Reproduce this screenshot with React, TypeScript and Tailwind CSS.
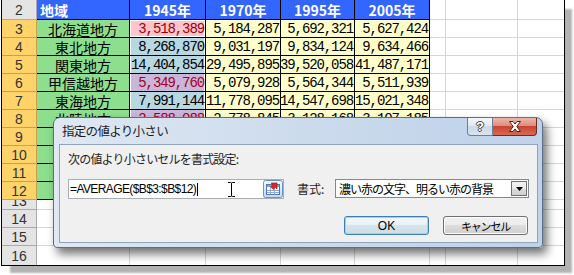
import React from "react";

const JP = "font-['Noto_Sans_CJK_JP',sans-serif]";
const NUM = "font-['Liberation_Mono',monospace] text-[14px] tracking-[-1.1px]";
const GRID =
  "grid grid-cols-[35px_93px_76px_75px_74px_75px_16px_72px_46px] grid-rows-[20px_repeat(10,18px)_10px_18px_18px_19px] leading-[16px]";

interface IRow {
  n: number;
  name: string;
  b: string;
  kind: "hot" | "low" | "sel";
  c: string;
  d: string;
  e: string;
}

// rows 9-12 sit fully under the dialog, so their values are left blank
const rows: IRow[] = [
  { n: 3, name: "北海道地方", b: "3,518,389", kind: "hot", c: "5,184,287", d: "5,692,321", e: "5,627,424" },
  { n: 4, name: "東北地方", b: "8,268,870", kind: "sel", c: "9,031,197", d: "9,834,124", e: "9,634,466" },
  { n: 5, name: "関東地方", b: "14,404,854", kind: "sel", c: "29,495,895", d: "39,520,058", e: "41,487,171" },
  { n: 6, name: "甲信越地方", b: "5,349,760", kind: "low", c: "5,079,928", d: "5,564,344", e: "5,511,939" },
  { n: 7, name: "東海地方", b: "7,991,144", kind: "sel", c: "11,778,095", d: "14,547,698", e: "15,021,348" },
  { n: 8, name: "北陸地方", b: "2,588,088", kind: "low", c: "2,778,845", d: "3,128,168", e: "3,107,185" },
  { n: 9, name: "", b: "", kind: "sel", c: "", d: "", e: "" },
  { n: 10, name: "", b: "", kind: "sel", c: "", d: "", e: "" },
  { n: 11, name: "", b: "", kind: "sel", c: "", d: "", e: "" },
  { n: 12, name: "", b: "", kind: "sel", c: "", d: "", e: "" },
];

const bCell = {
  hot: "bg-[#ffc4cc] text-[#9c0006] shadow-[inset_0_0_0_1px_#ffffff]",
  low: "bg-[#c9b6da] text-[#a3001e] shadow-[inset_1px_0_0_#ffffff,inset_-1px_0_0_#ffffff]",
  sel: "bg-[#b7d8e0] text-black shadow-[inset_1px_0_0_#ffffff,inset_-1px_0_0_#ffffff]",
};

const Empty = ({ last, edge }: { last?: boolean; edge?: boolean }) => (
  <div
    className={`border-[#d6d6d6] bg-white ${edge ? "" : "border-r"} ${last ? "" : "border-b"}`}
  />
);

const RowHead = ({ label, hl, last }: { label: string; hl?: boolean; last?: boolean }) => (
  <div
    className={`flex items-center justify-center overflow-hidden border-r font-['Liberation_Sans',sans-serif] text-[14px] text-[#333] ${
      last ? "" : "border-b"
    } ${hl ? "bg-[#fdd36a] border-[#c9a14c]" : "bg-[#e4e4e4] border-[#a7abb0]"}`}
  >
    {label}
  </div>
);

const NumCell = ({ v, cls }: { v: string; cls: string }) => (
  <div
    className={`flex items-center justify-end overflow-hidden whitespace-nowrap border-r border-b border-black pr-[1px] ${NUM} ${cls}`}
  >
    {v}
  </div>
);

const Sheet = () => (
  <div className={GRID}>
    {/* header row */}
    <RowHead label="2" />
    <div className={`flex items-center border-r border-b border-black bg-[#3366ff] pl-[3px] text-[14px] font-bold text-white ${JP}`}>
      地域
    </div>
    {["1945年", "1970年", "1995年", "2005年"].map((y) => (
      <div
        key={y}
        className={`flex items-center justify-center border-r border-b border-black bg-[#3366ff] text-[14px] font-bold text-white ${JP}`}
      >
        {y}
      </div>
    ))}
    <Empty />
    <Empty />
    <Empty edge />

    {rows.map((r) => (
      <React.Fragment key={r.n}>
        <RowHead label={String(r.n)} hl />
        <div className={`flex items-center justify-center overflow-hidden whitespace-nowrap border-r border-b border-black bg-[#8ddf8d] text-[14px] text-black ${JP}`}>
          {r.name}
        </div>
        <NumCell v={r.b} cls={bCell[r.kind]} />
        <NumCell v={r.c} cls="bg-[#ffffcc] text-black" />
        <NumCell v={r.d} cls="bg-[#ffffcc] text-black" />
        <NumCell v={r.e} cls="bg-[#ffffcc] text-black" />
        <Empty />
        <Empty />
        <Empty edge />
      </React.Fragment>
    ))}

    {/* row 13 is squashed under the selection */}
    <div className="overflow-hidden border-r border-b border-[#a7abb0] bg-[#e4e4e4]">
      <div className="-mt-[8px] flex h-[18px] items-center justify-center font-['Liberation_Sans',sans-serif] text-[14px] text-[#333]">
        13
      </div>
    </div>
    {[1, 2, 3, 4, 5, 6, 7].map((i) => (
      <Empty key={i} />
    ))}
    <Empty edge />

    {[14, 15, 16].map((n) => (
      <React.Fragment key={n}>
        <RowHead label={String(n)} last={n === 16} />
        {[1, 2, 3, 4, 5, 6, 7].map((i) => (
          <Empty key={i} last={n === 16} />
        ))}
        <Empty edge last={n === 16} />
      </React.Fragment>
    ))}
  </div>
);

const RefButton = () => (
  <svg width="20" height="18" viewBox="0 0 20 18">
    <defs>
      <linearGradient id="rb" x1="0" y1="0" x2="0" y2="1">
        <stop offset="0" stopColor="#f4f8fd" />
        <stop offset="0.5" stopColor="#dce8f6" />
        <stop offset="1" stopColor="#c4d8ef" />
      </linearGradient>
    </defs>
    <rect x="0.5" y="0.5" width="19" height="17" rx="2" fill="url(#rb)" stroke="#6a93c4" />
    <rect x="3.5" y="4.5" width="13" height="10" fill="#ffffff" stroke="#4a78b8" />
    <rect x="4" y="5" width="12" height="2" fill="#7aa1d8" />
    <path d="M4 10.5H16M4 12.5H16M7.5 5V14.5M11.5 5V14.5" stroke="#8cabd6" strokeWidth="1" />
    <path d="M8 3H14V9L12.3 7.3L10.2 9.4L7.6 6.8L9.7 4.7Z" fill="#e3271d" stroke="#a3120c" strokeWidth="0.6" />
  </svg>
);

const IBeam = () => (
  <svg width="9" height="17" viewBox="0 0 9 17" className="absolute left-[158px] top-[1px]">
    <path
      d="M1 1.5H3.5Q4.5 1.5 4.5 2.5Q4.5 1.5 5.5 1.5H8M4.5 2.5V14.5M1 15.5H3.5Q4.5 15.5 4.5 14.5Q4.5 15.5 5.5 15.5H8"
      stroke="#ffffff"
      strokeWidth="3"
      fill="none"
    />
    <path
      d="M1 1.5H3.5Q4.5 1.5 4.5 2.5Q4.5 1.5 5.5 1.5H8M4.5 2.5V14.5M1 15.5H3.5Q4.5 15.5 4.5 14.5Q4.5 15.5 5.5 15.5H8"
      stroke="#000000"
      strokeWidth="1"
      fill="none"
    />
  </svg>
);

const Dialog = () => (
  <div className="absolute left-[51px] top-[117px] flex h-[131px] w-[490px] flex-col rounded-t-[7px] rounded-b-[4px] border border-[#5c6f86] bg-[linear-gradient(90deg,#dfe8f3,#cbdaec_55%,#bed2ea)] shadow-[4px_6px_10px_rgba(0,0,0,0.55)]">
    {/* title bar */}
    <div className="flex h-[26px] items-start">
      <div className={`pl-[8px] pt-[5px] text-[12.5px] leading-[16px] tracking-[-0.7px] text-[#1b1b1b] ${JP}`}>
        指定の値より小さい
      </div>
      <div className="ml-auto mr-[5px] flex">
        <div className="flex h-[18px] w-[26px] items-center justify-center rounded-bl-[4px] border border-t-0 border-[#6d7f96] bg-[linear-gradient(#f4f7fb,#e1e9f2_45%,#cbd8e8_50%,#d9e4f0)] font-['Liberation_Sans',sans-serif] text-[13px] font-bold text-white [text-shadow:1px_0_0_#3a4350,-1px_0_0_#3a4350,0_1px_0_#3a4350,0_-1px_0_#3a4350]">
          ?
        </div>
        <div className="flex h-[18px] w-[44px] items-center justify-center rounded-br-[4px] border border-l-0 border-t-0 border-[#6e2a21] bg-[linear-gradient(#ecb5ab,#df8e7f_45%,#c8452f_50%,#d86a52)]">
          <svg width="14" height="11" viewBox="0 0 14 11">
            <path
              d="M1.5 0.5H5L7 3L9 0.5H12.5L8.8 5.5L12.5 10.5H9L7 8L5 10.5H1.5L5.2 5.5Z"
              fill="#ffffff"
              stroke="#5a1d16"
              strokeWidth="1"
              strokeLinejoin="round"
            />
          </svg>
        </div>
      </div>
    </div>

    {/* body */}
    <div className="mb-[4px] ml-[5px] mr-[4px] flex flex-1 flex-col border border-[#8fa3ba] bg-[#f0f0f0] pl-[8px] pt-[6px]">
      <div className={`h-[16px] text-[12px] leading-[16px] tracking-[-0.8px] text-[#1e1e1e] ${JP}`}>
        次の値より小さいセルを書式設定:
      </div>

      <div className="mt-[12px] flex items-start">
        <div className="relative flex h-[20px] w-[216px] items-center border border-[#abadb3] bg-white">
          <span className="pl-[1px] font-['Liberation_Sans',sans-serif] text-[12px] leading-[16px] tracking-[-0.6px] text-black">
            =AVERAGE($B$3:$B$12)
          </span>
          <span className="ml-[1px] h-[13px] w-[1px] bg-black" />
          <IBeam />
          <div className="ml-auto flex">
            <RefButton />
          </div>
        </div>
        <div className={`ml-[13px] w-[38px] pt-[1px] text-[12px] leading-[18px] text-[#1e1e1e] ${JP}`}>書式:</div>
        <div className="flex h-[19px] w-[194px] items-center border border-[#828790] bg-white">
          <span className={`pl-[3px] text-[12px] leading-[16px] tracking-[-1px] text-black ${JP}`}>
            濃い赤の文字、明るい赤の背景
          </span>
          <div className="ml-auto mr-[1px] flex h-[15px] w-[16px] items-center justify-center border border-[#707070] bg-[linear-gradient(#f2f2f2,#ebebeb_50%,#dddddd_50%,#cfcfcf)]">
            <svg width="7" height="4" viewBox="0 0 7 4">
              <path d="M0 0H7L3.5 4Z" fill="#000000" />
            </svg>
          </div>
        </div>
      </div>

      <div className="mt-[17px] flex justify-end gap-[14px] pr-[9px]">
        <div className="flex h-[19px] w-[85px] items-center justify-center rounded-[3px] border border-[#3c7fb1] bg-[linear-gradient(#f2f8fb,#e6f0f6_50%,#d6e4ec_50%,#cddde6)] font-['Liberation_Sans',sans-serif] text-[12px] leading-[16px] text-black shadow-[inset_0_0_0_1px_#8fd8f7]">
          OK
        </div>
        <div className={`flex h-[19px] w-[85px] items-center justify-center rounded-[3px] border border-[#707070] bg-[linear-gradient(#f2f2f2,#ebebeb_50%,#dddddd_50%,#cfcfcf)] text-[11px] leading-[16px] tracking-[-1.2px] text-black shadow-[inset_0_0_0_1px_#fcfcfc] ${JP}`}>
          キャンセル
        </div>
      </div>
    </div>
  </div>
);

const App = () => {
  return (
    <div className="h-[275px] w-[574px] overflow-hidden bg-white">
      <div className="relative ml-[1px] w-[564px] border-x border-b border-black shadow-[8px_8px_2px_-1px_rgba(0,0,0,0.3)]">
        <Sheet />
        <Dialog />
      </div>
    </div>
  );
};

export default App;
